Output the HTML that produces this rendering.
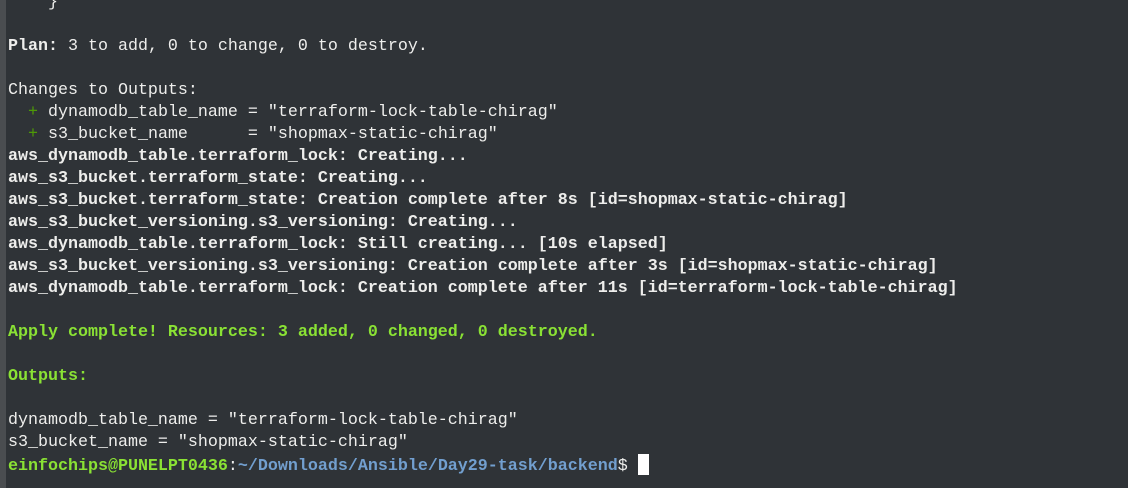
<!DOCTYPE html>
<html><head><meta charset="utf-8"><style>
html,body{margin:0;padding:0;}
body{width:1128px;height:488px;overflow:hidden;background:#2f3337;position:relative;}
.strip{position:absolute;left:0;top:0;width:6px;height:488px;background:#4a4d50;}
pre{position:absolute;left:8px;top:-8px;margin:0;font-family:"Liberation Mono",monospace;font-size:16.67px;line-height:22px;color:#eeeeec;white-space:pre;}
b{font-weight:bold;}
.g{color:#8ae234;}
.pl{color:#4e9a06;}
.bl{color:#729fcf;}
.cur{display:inline-block;width:11px;height:21px;background:#fff;vertical-align:-5px;}
</style></head><body>
<div class="strip"></div>
<pre>    }

<b>Plan:</b> 3 to add, 0 to change, 0 to destroy.

Changes to Outputs:
  <span class="pl">+</span> dynamodb_table_name = "terraform-lock-table-chirag"
  <span class="pl">+</span> s3_bucket_name      = "shopmax-static-chirag"
<b>aws_dynamodb_table.terraform_lock: Creating...</b>
<b>aws_s3_bucket.terraform_state: Creating...</b>
<b>aws_s3_bucket.terraform_state: Creation complete after 8s [id=shopmax-static-chirag]</b>
<b>aws_s3_bucket_versioning.s3_versioning: Creating...</b>
<b>aws_dynamodb_table.terraform_lock: Still creating... [10s elapsed]</b>
<b>aws_s3_bucket_versioning.s3_versioning: Creation complete after 3s [id=shopmax-static-chirag]</b>
<b>aws_dynamodb_table.terraform_lock: Creation complete after 11s [id=terraform-lock-table-chirag]</b>

<b class="g">Apply complete! Resources: 3 added, 0 changed, 0 destroyed.</b>

<b class="g">Outputs:</b>

dynamodb_table_name = "terraform-lock-table-chirag"
s3_bucket_name = "shopmax-static-chirag"
<b class="g">einfochips@PUNELPT0436</b>:<b class="bl">~/Downloads/Ansible/Day29-task/backend</b>$ <span class="cur"></span></pre>
</body></html>
